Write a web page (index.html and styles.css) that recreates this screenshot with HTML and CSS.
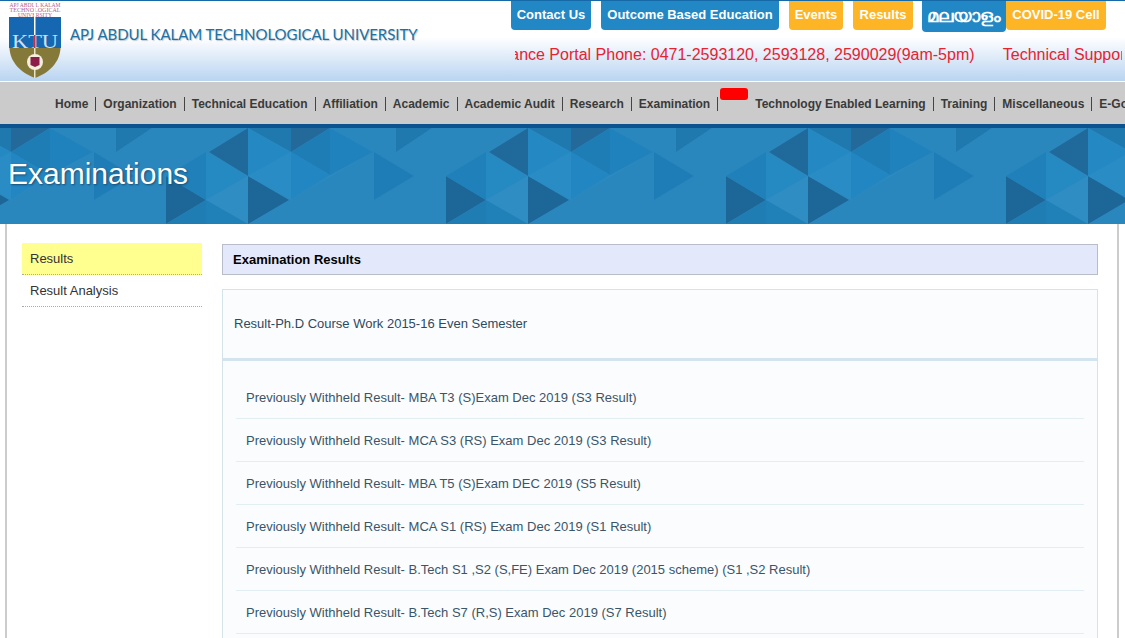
FILE: index.html
```html
<!DOCTYPE html>
<html lang="en">
<head>
  <meta charset="UTF-8" />
  <meta name="viewport" content="width=device-width, initial-scale=1.0" />
  <title>Examinations</title>
  <link rel="stylesheet" href="styles.css">
</head>
<body>

  <div class="header">
    <div class="brand">
      <svg class="logo" width="52" height="80" viewBox="0 0 52 80">
        <text class="logo-small" x="26" y="6" textLength="51" lengthAdjust="spacingAndGlyphs">APJ ABDUL KALAM</text>
        <text class="logo-small" x="26" y="11" textLength="51" lengthAdjust="spacingAndGlyphs">TECHNOLOGICAL</text>
        <text class="logo-small" x="26" y="15.5" textLength="34" lengthAdjust="spacingAndGlyphs">UNIVERSITY</text>
        <rect x="0" y="16" width="52" height="31" fill="#1467b0" />
        <path d="M0.5 47 H51.5 C51 61 40 72 26 77 C12 72 1 61 0.5 47 Z" fill="#85793a" />
        <text class="logo-ktu" x="26" y="46.5" textLength="46" lengthAdjust="spacingAndGlyphs">KTU</text>
        <rect x="25" y="0" width="1.5" height="34" fill="#fff" />
        <rect x="25" y="34" width="1.5" height="13" fill="#c0304a" />
        <rect x="25" y="47" width="1.5" height="30" fill="#e8e4c8" />
        <circle cx="26" cy="61" r="8" fill="#f3efdc" />
        <path d="M21.5 56 H30.5 V64 L26 66 L21.5 64 Z" fill="#8c1c48" />
      </svg>
      <div class="brand-name">APJ ABDUL KALAM TECHNOLOGICAL UNIVERSITY</div>
    </div>

    <div class="header-right">
      <div class="top-links">
        <a class="blue contact" href="#">Contact Us</a>
        <a class="blue obe" href="#">Outcome Based Education</a>
        <a class="orange events" href="#">Events</a>
        <a class="orange results" href="#">Results</a>
        <a class="blue malayalam" href="#">മലയാളം</a>
        <a class="orange covid" href="#">COVID-19 Cell</a>
      </div>
      <div class="marquee">
        <div class="marquee-text">
          <span>Grievance Portal Phone: 0471-2593120, 2593128, 2590029(9am-5pm)</span>
          <span>Technical Support</span>
        </div>
      </div>
    </div>
  </div>

  <div class="navbar">
    <a href="#">Home</a>
    <a href="#">Organization</a>
    <a href="#">Technical Education</a>
    <a href="#">Affiliation</a>
    <a href="#">Academic</a>
    <a href="#">Academic Audit</a>
    <a href="#">Research</a>
    <a href="#">Examination</a>
    <span class="new-badge"></span>
    <a href="#">Technology Enabled Learning</a>
    <a href="#">Training</a>
    <a href="#">Miscellaneous</a>
    <a href="#">E-Governance</a>
  </div>

  <div class="banner">
    <svg class="banner-bg" width="100%" height="96">
      <defs>
        <pattern id="triangles" patternUnits="userSpaceOnUse" x="11" y="0" width="280" height="96" viewBox="11 0 280 96">
          <polygon points="50,47 93,24 11,71" fill="#2a8ac1" />
          <polygon points="11,0 50,0 11,24" fill="#23699a" />
          <polygon points="50,0 50,47 11,24" fill="#1f7db5" />
          <polygon points="50,0 93,24 50,47" fill="#1f82bd" />
          <polygon points="11,24 50,47 11,71" fill="#2186c1" />
          <polygon points="94,24 134,48 94,72" fill="#1e7db6" />
          <polygon points="116,0 152,0 116,24" fill="#1f78ae" />
          <polygon points="248,0 209,24 248,48" fill="#1f6a9b" />
          <polygon points="248,48 289,72 248,96" fill="#1c6797" />
          <polygon points="166,48 206,72 166,96" fill="#1c6797" />
          <polygon points="206,24 166,48 206,72" fill="#1f80ba" />
          <polygon points="206,24 248,48 206,72" fill="#2589c2" />
          <polygon points="206,72 248,48 248,96" fill="#2f8dc3" />
          <polygon points="206,72 166,96 206,96" fill="#1f7db3" />
          <polygon points="206,72 248,96 206,96" fill="#2081b9" />
          <polygon points="248,0 291,24 291,0" fill="#1f78ae" />
          <polygon points="248,0 291,24 248,48" fill="#2489c3" />
          <polygon points="291,24 248,48 291,72" fill="#2a8cc5" />
        </pattern>
      </defs>
      <rect width="100%" height="96" fill="#2a87bd" />
      <rect width="100%" height="96" fill="url(#triangles)" />
    </svg>
    <h1>Examinations</h1>
  </div>

  <div class="content">
    <div class="sidebar">
      <a class="active" href="#">Results</a>
      <a href="#">Result Analysis</a>
    </div>

    <div class="main">
      <h2>Examination Results</h2>

      <div class="first-result">
        <a href="#">Result-Ph.D Course Work 2015-16 Even Semester</a>
      </div>

      <div class="result-list">
        <a href="#">Previously Withheld Result- MBA T3 (S)Exam Dec 2019 (S3 Result)</a>
        <a href="#">Previously Withheld Result- MCA S3 (RS) Exam Dec 2019 (S3 Result)</a>
        <a href="#">Previously Withheld Result- MBA T5 (S)Exam DEC 2019 (S5 Result)</a>
        <a href="#">Previously Withheld Result- MCA S1 (RS) Exam Dec 2019 (S1 Result)</a>
        <a href="#">Previously Withheld Result- B.Tech S1 ,S2 (S,FE) Exam Dec 2019 (2015 scheme) (S1 ,S2 Result)</a>
        <a href="#">Previously Withheld Result- B.Tech S7 (R,S) Exam Dec 2019 (S7 Result)</a>
      </div>
    </div>
  </div>

</body>
</html>
```

FILE: styles.css
```css
* {
  box-sizing: border-box;
  font-family: "Liberation Sans", Arial, sans-serif;
}

html, body {
  margin: 0;
  height: 100%;
  overflow: hidden;
  background: #fff;
}

a {
  text-decoration: none;
}

.header {
  height: 82px;
  display: flex;
  justify-content: space-between;
  background: linear-gradient(to bottom, #fff 0, #fff 36px, #b9d4f1 80px, #fff 80px);
  border-top: 1px solid #1669a7;
}

.brand {
  display: flex;
  align-items: flex-start;
  padding-left: 9px;
}

.logo {
  display: block;
}

.logo-small {
  font-family: "Liberation Serif", serif;
  font-size: 6px;
  fill: #b0638a;
  text-anchor: middle;
}

.logo-ktu {
  font-family: "Liberation Serif", serif;
  font-size: 19px;
  fill: #cfe0f2;
  text-anchor: middle;
}

.brand-name {
  margin: 24px 0 0 9px;
  font-family: Lato, sans-serif;
  font-size: 15px;
  letter-spacing: -0.05px;
  color: #22709f;
  text-shadow: 1px 1px 1px #b9c9d6;
  white-space: nowrap;
}

.header-right {
  width: 614px;
}

.top-links {
  display: flex;
  align-items: flex-start;
  height: 36px;
}

.top-links a {
  height: 29px;
  line-height: 28px;
  text-align: center;
  font-size: 13px;
  font-weight: bold;
  color: #fff;
  border-radius: 0 0 4px 4px;
  white-space: nowrap;
}

.blue {
  background: #2287c5;
}

.orange {
  background: #fdb525;
}

.top-links .contact {
  width: 80px;
  margin-right: 10px;
}

.top-links .obe {
  width: 178px;
  margin-right: 10px;
}

.top-links .events {
  width: 54px;
  margin-right: 10px;
}

.top-links .results {
  width: 60px;
  margin-right: 9px;
}

.top-links .malayalam {
  width: 84px;
  height: 31px;
  line-height: 31px;
  font-size: 18px;
}

.top-links .covid {
  width: 100px;
}

.marquee {
  margin: 0 3px 0 4px;
  overflow: hidden;
  height: 28px;
  line-height: 36px;
}

.marquee-text {
  margin-left: -43px;
  white-space: nowrap;
  font-size: 16px;
  color: #e8222f;
}

.marquee-text span {
  margin-right: 24px;
}

.navbar {
  height: 46px;
  padding: 15px 0 0 48px;
  display: flex;
  align-items: flex-start;
  background: #cbcbcb;
  border-bottom: 4px solid #0b5490;
  overflow: hidden;
  white-space: nowrap;
}

.navbar a {
  flex-shrink: 0;
  padding: 0 7px;
  border-right: 1px solid #444;
  font-size: 12px;
  line-height: 14px;
  font-weight: bold;
  color: #3a3a3a;
}

.new-badge {
  flex-shrink: 0;
  width: 28px;
  height: 12px;
  margin: -9px 0 0 2px;
  background: #f00;
  border-radius: 3px;
}

.banner {
  position: relative;
  height: 96px;
}

.banner-bg {
  position: absolute;
  left: 0;
  top: 0;
}

.banner h1 {
  position: relative;
  margin: 0;
  padding: 28px 0 0 8px;
  font-size: 30px;
  line-height: 36px;
  font-weight: normal;
  color: #fff;
  text-shadow: 1px 1px 2px #1a4f75;
}

.content {
  display: flex;
  gap: 20px;
  height: 414px;
  margin: 0 6px 0 5px;
  padding: 19px 19px 0 15px;
  border-left: 2px solid #ccc;
  border-right: 2px solid #ccc;
  overflow: hidden;
}

.sidebar {
  width: 180px;
  flex-shrink: 0;
}

.sidebar a {
  display: block;
  height: 32px;
  padding-left: 8px;
  line-height: 32px;
  font-size: 13px;
  color: #333;
  border-bottom: 1px dotted #aaa;
}

.sidebar a.active {
  background: #ffff8f;
}

.main {
  flex: 1;
}

.main h2 {
  height: 31px;
  margin: 1px 0 14px;
  padding-left: 10px;
  line-height: 29px;
  font-size: 13px;
  color: #000;
  background: #e4e8fb;
  border: 1px solid #b9bdc9;
}

.first-result {
  height: 72px;
  padding-left: 11px;
  background: #fbfcfe;
  border: 1px solid #d5e3ea;
  border-bottom: 3px solid #d3e4ef;
}

.first-result a {
  display: block;
  line-height: 68px;
  font-size: 13px;
  color: #2d4a5e;
}

.result-list {
  height: 400px;
  padding: 15px 13px 0;
  background: #fbfcfe;
  border-left: 1px solid #d5e3ea;
  border-right: 1px solid #d5e3ea;
}

.result-list a {
  display: block;
  height: 43px;
  padding-left: 10px;
  line-height: 44px;
  font-size: 13px;
  color: #3a5568;
  border-bottom: 1px solid #e3eef3;
}
```
